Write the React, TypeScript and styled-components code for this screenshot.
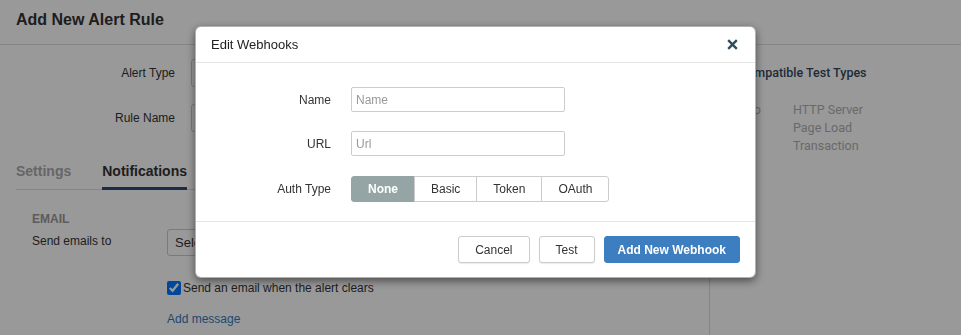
import styled, { createGlobalStyle } from 'styled-components'

const GlobalStyle = createGlobalStyle`
  html, body {
    margin: 0;
    padding: 0;
    background: #ffffff;
    font-family: "Liberation Sans", Arial, sans-serif;
    color: #333333;
  }
  * {
    box-sizing: border-box;
  }
`

const authTypes = ['None', 'Basic', 'Token', 'OAuth']
const testTypes = ['HTTP Server', 'Page Load', 'Transaction']

export default function App() {
  return (
    <>
      <GlobalStyle />
      <Page>
        <PageHeader>
          <PageTitle>Add New Alert Rule</PageTitle>
        </PageHeader>
        <Main>
          <LeftColumn>
            <FormRow>
              <FormLabel>Alert Type</FormLabel>
              <FieldBox>Select...</FieldBox>
            </FormRow>
            <FormRow $gap>
              <FormLabel>Rule Name</FormLabel>
              <FieldBox />
            </FormRow>

            <TabBar>
              <Tab>Settings</Tab>
              <Tab $active>Notifications</Tab>
            </TabBar>

            <Section>
              <SectionTitle>EMAIL</SectionTitle>
              <EmailRow>
                <EmailLabel>Send emails to</EmailLabel>
                <SelectBox>Select...</SelectBox>
              </EmailRow>
              <CheckRow>
                <Checkbox type="checkbox" defaultChecked />
                <span>Send an email when the alert clears</span>
              </CheckRow>
              <LinkText>Add message</LinkText>
            </Section>
          </LeftColumn>

          <Sidebar>
            <SidebarTitle>Compatible Test Types</SidebarTitle>
            <TypeGrid>
              <TypeLabel>Info</TypeLabel>
              <TypeList>
                {testTypes.map((t) => (
                  <TypeItem key={t}>{t}</TypeItem>
                ))}
              </TypeList>
            </TypeGrid>
          </Sidebar>
        </Main>
      </Page>

      <Backdrop />

      <Modal>
        <ModalHeader>
          <ModalTitle>Edit Webhooks</ModalTitle>
          <CloseButton aria-label="Close">
            <svg width="11" height="11" viewBox="0 0 12 12">
              <path
                d="M2.2 0.4 L6 4.2 L9.8 0.4 L11.6 2.2 L7.8 6 L11.6 9.8 L9.8 11.6 L6 7.8 L2.2 11.6 L0.4 9.8 L4.2 6 L0.4 2.2 Z"
                fill="currentColor"
              />
            </svg>
          </CloseButton>
        </ModalHeader>

        <ModalBody>
          <FieldLabel>Name</FieldLabel>
          <TextInput placeholder="Name" />
          <FieldLabel>URL</FieldLabel>
          <TextInput placeholder="Url" />
          <FieldLabel>Auth Type</FieldLabel>
          <Segmented>
            {authTypes.map((a) => (
              <SegmentButton key={a} $active={a === 'None'}>
                {a}
              </SegmentButton>
            ))}
          </Segmented>
        </ModalBody>

        <ModalFooter>
          <Button>Cancel</Button>
          <Button>Test</Button>
          <Button $primary>Add New Webhook</Button>
        </ModalFooter>
      </Modal>
    </>
  )
}

const Page = styled.div`
  width: 961px;
  height: 335px;
  overflow: hidden;
`

const PageHeader = styled.div`
  height: 45px;
  padding: 10px 16px 0;
  border-bottom: 1px solid #dddddd;
`

const PageTitle = styled.h1`
  margin: 0;
  font-size: 16px;
  line-height: 19px;
  font-weight: bold;
  color: #333333;
`

const Main = styled.div`
  display: flex;
  height: 290px;
`

const LeftColumn = styled.div`
  width: 710px;
  padding: 13px 16px 0;
  border-right: 1px solid #dddddd;
`

const FormRow = styled.div<{ $gap?: boolean }>`
  display: grid;
  grid-template-columns: 159px 300px;
  column-gap: 16px;
  align-items: center;
  height: 30px;
  margin-top: ${({ $gap }) => ($gap ? '15px' : '0')};
`

const FormLabel = styled.div`
  text-align: right;
  font-size: 12px;
  color: #333333;
`

const FieldBox = styled.div`
  height: 28px;
  border: 1px solid #cccccc;
  border-radius: 3px;
  padding: 0 8px;
  font-size: 12px;
  line-height: 26px;
`

const TabBar = styled.div`
  display: flex;
  gap: 31px;
  margin-top: 23px;
  border-bottom: 1px solid #dddddd;
`

const Tab = styled.div<{ $active?: boolean }>`
  padding: 7px 0 8px;
  font-size: 14px;
  line-height: 16px;
  font-weight: bold;
  color: ${({ $active }) => ($active ? '#333333' : '#aaaaaa')};
  border-bottom: 3px solid ${({ $active }) => ($active ? '#2c4a78' : 'transparent')};
  margin-bottom: -1px;
`

const Section = styled.div`
  padding-left: 16px;
`

const SectionTitle = styled.div`
  margin-top: 22px;
  font-size: 12px;
  line-height: 14px;
  font-weight: bold;
  color: #999999;
`

const EmailRow = styled.div`
  display: grid;
  grid-template-columns: 135px 300px;
  margin-top: 3px;
`

const EmailLabel = styled.div`
  padding-top: 5px;
  font-size: 12px;
  line-height: 14px;
  color: #333333;
`

const SelectBox = styled.div`
  height: 27px;
  border: 1px solid #cccccc;
  border-radius: 3px;
  padding: 0 7px;
  font-size: 13px;
  line-height: 25px;
  color: #333333;
`

const CheckRow = styled.label`
  display: flex;
  align-items: center;
  margin: 25px 0 0 135px;
  font-size: 12px;
  line-height: 14px;
  color: #333333;
`

const Checkbox = styled.input`
  width: 14px;
  height: 14px;
  margin: 0 2px 0 0;
  accent-color: #0075ff;
`

const LinkText = styled.div`
  margin: 17px 0 0 135px;
  font-size: 12px;
  line-height: 14px;
  color: #337ab7;
`

const Sidebar = styled.div`
  flex: 1;
  padding: 20px 0 0 29px;
  font-family: Roboto, "Liberation Sans", sans-serif;
`

const SidebarTitle = styled.div`
  font-size: 12.5px;
  line-height: 16px;
  font-weight: 500;
  color: #34495e;
`

const TypeGrid = styled.div`
  display: grid;
  grid-template-columns: 54px 1fr;
  margin-top: 20px;
  font-size: 12.5px;
  line-height: 18px;
  color: #b0b0b0;
`

const TypeLabel = styled.div``

const TypeList = styled.div`
  display: flex;
  flex-direction: column;
`

const TypeItem = styled.div``

const Backdrop = styled.div`
  position: fixed;
  inset: 0;
  background: rgba(0, 0, 0, 0.4);
`

const Modal = styled.div`
  position: fixed;
  left: 195px;
  top: 26px;
  width: 561px;
  background: #ffffff;
  border: 1px solid rgba(0, 0, 0, 0.3);
  border-radius: 6px;
  box-shadow: 0 3px 9px rgba(0, 0, 0, 0.5);
`

const ModalHeader = styled.div`
  display: flex;
  align-items: center;
  justify-content: space-between;
  height: 36px;
  padding: 0 17px 0 15px;
  border-bottom: 1px solid #e5e5e5;
`

const ModalTitle = styled.div`
  font-size: 13px;
  color: #222222;
`

const CloseButton = styled.span`
  display: flex;
  color: #2d4d5c;
`

const ModalBody = styled.div`
  display: grid;
  grid-template-columns: 135px 214px;
  column-gap: 20px;
  row-gap: 19px;
  align-items: center;
  padding: 24px 0 19px;
`

const FieldLabel = styled.div`
  text-align: right;
  font-size: 12px;
  color: #333333;
`

const TextInput = styled.input`
  height: 25px;
  width: 214px;
  border: 1px solid #cccccc;
  border-radius: 2px;
  padding: 0 4px;
  font-family: "Liberation Sans", Arial, sans-serif;
  font-size: 12px;
  color: #333333;
  outline: none;

  &::placeholder {
    color: #999999;
  }
`

const Segmented = styled.div`
  display: flex;
  width: max-content;
  margin-top: 1px;
`

const SegmentButton = styled.div<{ $active?: boolean }>`
  height: 26px;
  padding: 0 16px;
  font-size: 12px;
  line-height: 24px;
  border: 1px solid #cccccc;
  margin-left: -1px;
  background: ${({ $active }) => ($active ? '#95a5a6' : '#ffffff')};
  border-color: ${({ $active }) => ($active ? '#95a5a6' : '#cccccc')};
  color: ${({ $active }) => ($active ? '#ffffff' : '#333333')};
  font-weight: ${({ $active }) => ($active ? 'bold' : 'normal')};

  &:first-child {
    margin-left: 0;
    border-radius: 3px 0 0 3px;
  }
  &:last-child {
    border-radius: 0 3px 3px 0;
  }
`

const ModalFooter = styled.div`
  display: flex;
  justify-content: flex-end;
  gap: 9px;
  padding: 14px 15px 14px;
  border-top: 1px solid #e5e5e5;
`

const Button = styled.button<{ $primary?: boolean }>`
  height: 27px;
  padding: 0 ${({ $primary }) => ($primary ? '13px' : '16px')};
  font-family: "Liberation Sans", Arial, sans-serif;
  font-size: 12px;
  font-weight: ${({ $primary }) => ($primary ? 'bold' : 'normal')};
  border-radius: 3px;
  border: 1px solid ${({ $primary }) => ($primary ? '#3d7ec1' : '#cccccc')};
  background: ${({ $primary }) => ($primary ? '#3d7ec1' : '#ffffff')};
  color: ${({ $primary }) => ($primary ? '#ffffff' : '#333333')};
  box-shadow: ${({ $primary }) => ($primary ? 'none' : '0 1px 1px rgba(0, 0, 0, 0.08)')};
`
